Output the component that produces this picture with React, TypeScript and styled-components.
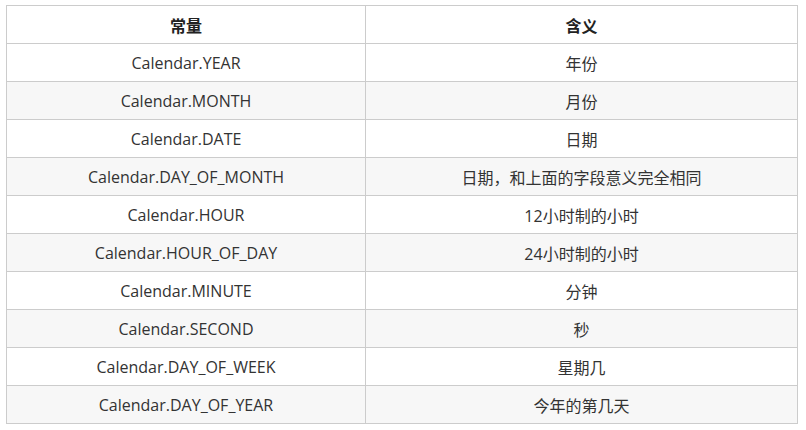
import styled, { createGlobalStyle } from "styled-components";

const GlobalStyle = createGlobalStyle`
	body {
		margin: 0;
		background: #fff;
		font-family: "Open Sans", "Noto Sans CJK SC", sans-serif;
		color: #333;
	}
`;

const Page = styled.div`
	padding: 5px 6px;
`;

const Table = styled.table`
	width: 792px;
	table-layout: fixed;
	border-collapse: collapse;
	font-size: 16px;
`;

const HeadCell = styled.th`
	height: 37px;
	padding: 0 8px;
	border: 1px solid #ccc;
	font-weight: bold;
	text-align: center;
	color: #222;
`;

const Row = styled.tr<{ striped: boolean }>`
	background-color: ${(props) => (props.striped ? "#f7f7f7" : "#fff")};
`;

const Cell = styled.td`
	height: 37px;
	padding: 0 8px;
	border: 1px solid #ccc;
	text-align: center;
`;

const rows: [string, string][] = [
	["Calendar.YEAR", "年份"],
	["Calendar.MONTH", "月份"],
	["Calendar.DATE", "日期"],
	["Calendar.DAY_OF_MONTH", "日期，和上面的字段意义完全相同"],
	["Calendar.HOUR", "12小时制的小时"],
	["Calendar.HOUR_OF_DAY", "24小时制的小时"],
	["Calendar.MINUTE", "分钟"],
	["Calendar.SECOND", "秒"],
	["Calendar.DAY_OF_WEEK", "星期几"],
	["Calendar.DAY_OF_YEAR", "今年的第几天"],
];

function App() {
	return (
		<>
			<GlobalStyle />
			<Page>
				<Table>
					<colgroup>
						<col style={{ width: 359 }} />
						<col />
					</colgroup>
					<thead>
						<tr>
							<HeadCell>常量</HeadCell>
							<HeadCell>含义</HeadCell>
						</tr>
					</thead>
					<tbody>
						{rows.map(([name, meaning], i) => (
							<Row key={name} striped={i % 2 === 1}>
								<Cell>{name}</Cell>
								<Cell>{meaning}</Cell>
							</Row>
						))}
					</tbody>
				</Table>
			</Page>
		</>
	);
}

export default App;
